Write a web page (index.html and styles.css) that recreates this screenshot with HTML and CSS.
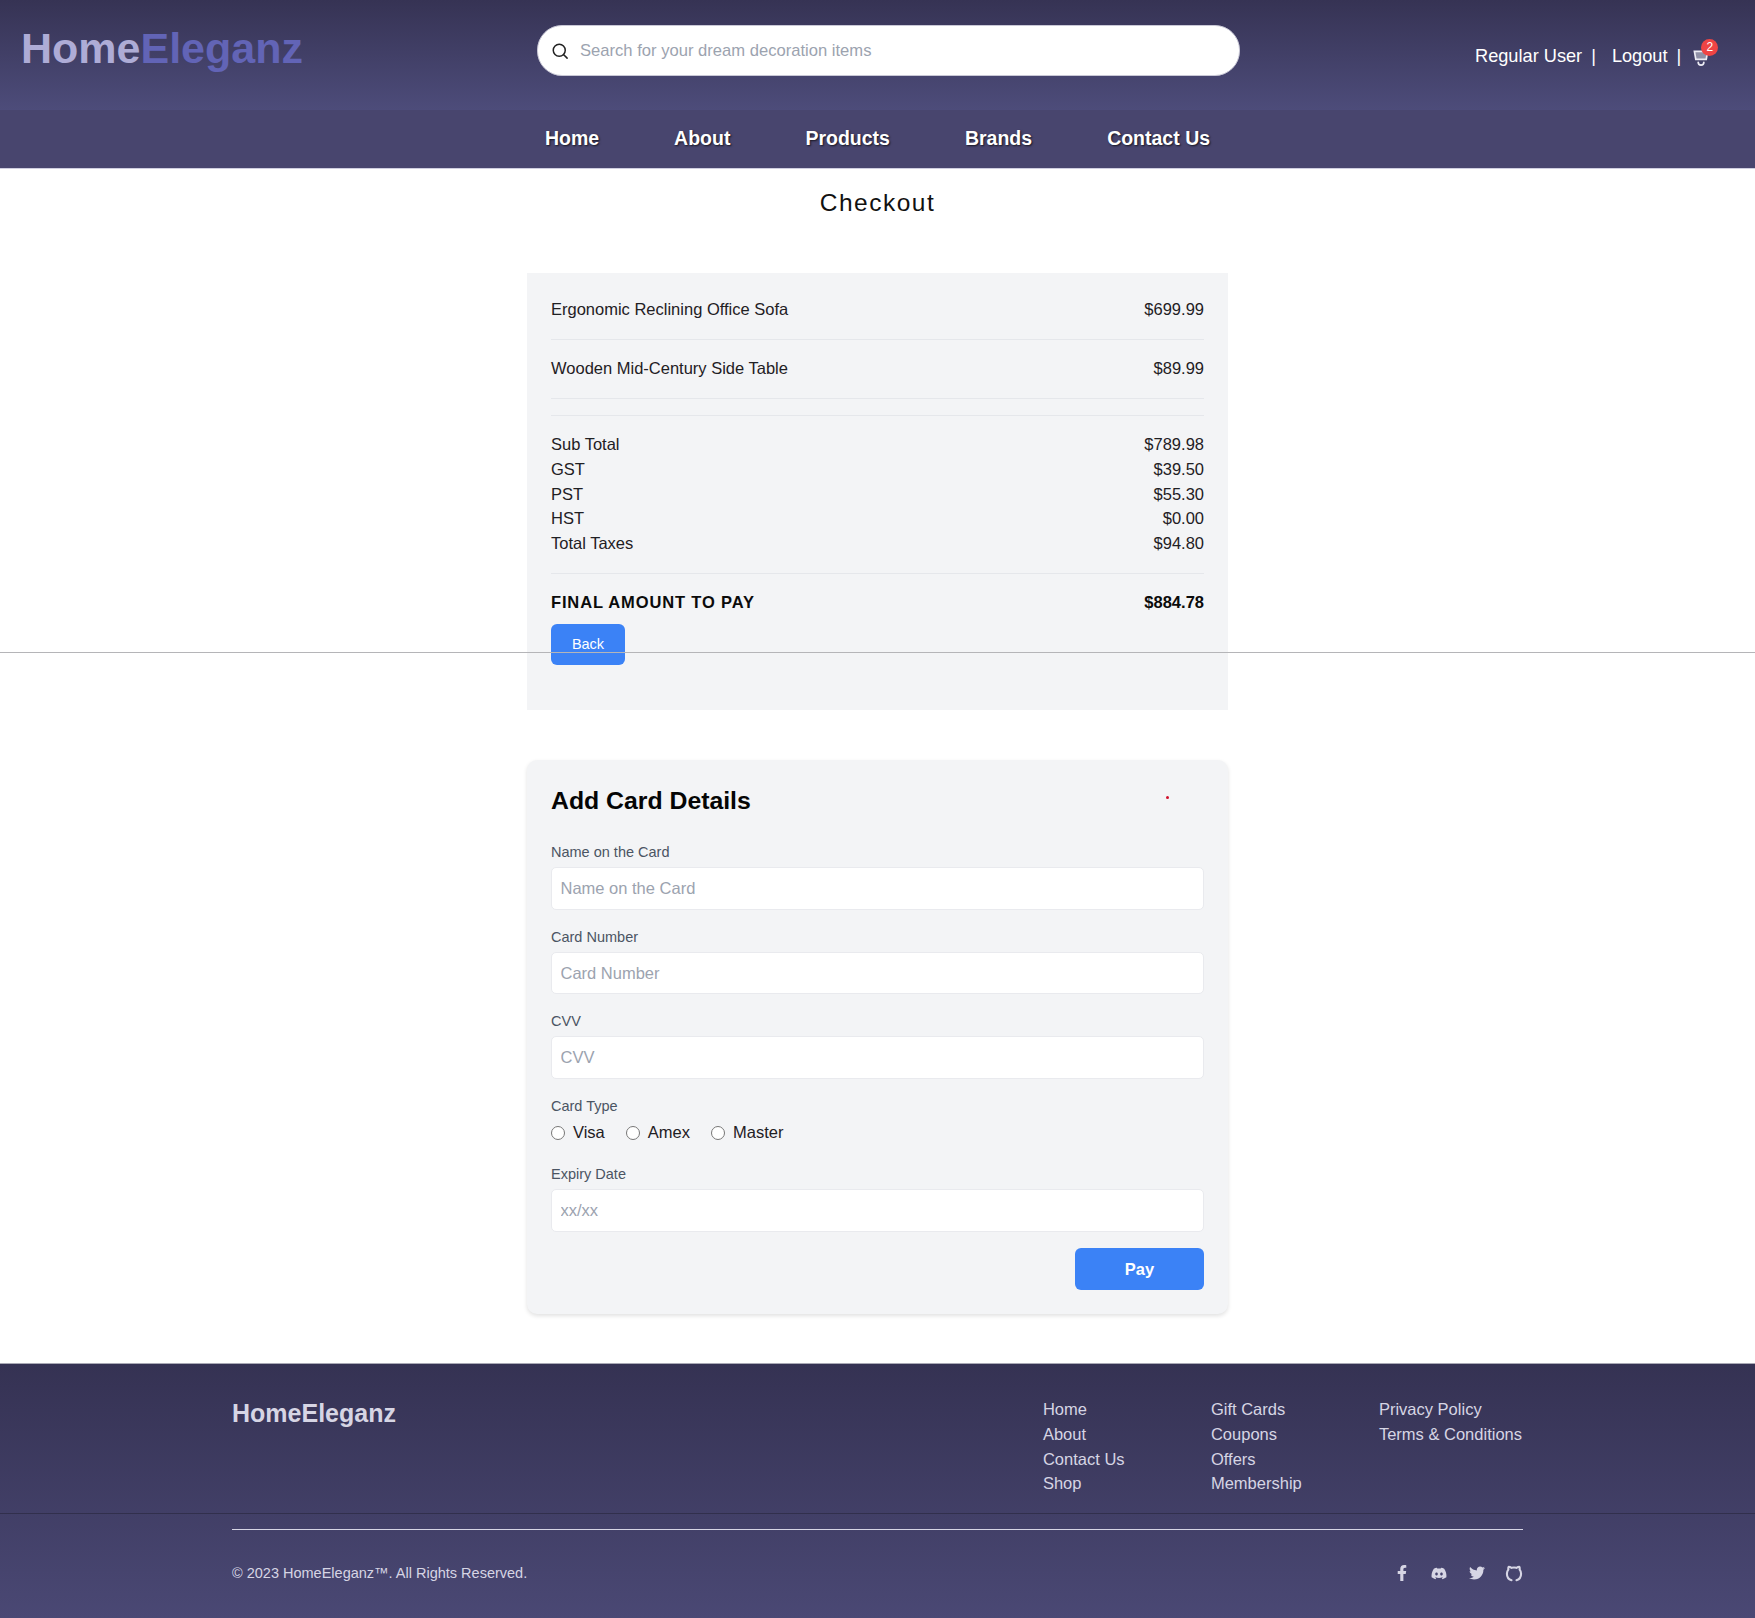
FILE: index.html
```html
<!DOCTYPE html>
<html>
<head>
<title>HomeEleganz - Checkout</title>
<link rel="stylesheet" href="styles.css">
</head>
<body>

<header class="topbar">
    <a class="logo" href="#"><span class="logo-home">Home</span><span class="logo-eleganz">Eleganz</span></a>
    <div class="search">
        <svg class="search-icon" viewBox="0 0 24 24" fill="none" stroke="#222" stroke-width="2" stroke-linecap="round"><circle cx="11" cy="11" r="8"/><line x1="17" y1="17" x2="21.5" y2="21.5"/></svg>
        <input class="search-input" type="text" placeholder="Search for your dream decoration items">
    </div>
    <div class="user-links">
        <a href="#">Regular User</a><span class="sep first-sep">|</span>
        <a href="#">Logout</a><span class="sep">|</span>
        <a class="cart" href="#">
            <svg class="cart-icon" viewBox="0 0 18 18" fill="none" stroke="#ecebf3" stroke-width="1.8" stroke-linecap="round"><path d="M1.5 1.5h14l-1.5 8.5H3z" fill="#8f90a6"/><path d="M5.5 13c0 4 6 4 6 0"/></svg>
            <span class="cart-badge">2</span>
        </a>
    </div>
</header>

<nav class="mainnav">
    <a href="#">Home</a>
    <a href="#">About</a>
    <a href="#">Products</a>
    <a href="#">Brands</a>
    <a href="#">Contact Us</a>
</nav>

<div class="stray-line"></div>

<main class="checkout">
    <h1 class="page-title">Checkout</h1>

    <section class="panel summary">
        <div class="item-row"><span>Ergonomic Reclining Office Sofa</span><span>$699.99</span></div>
        <div class="item-row"><span>Wooden Mid-Century Side Table</span><span>$89.99</span></div>

        <div class="totals">
            <div class="total-row"><span>Sub Total</span><span>$789.98</span></div>
            <div class="total-row"><span>GST</span><span>$39.50</span></div>
            <div class="total-row"><span>PST</span><span>$55.30</span></div>
            <div class="total-row"><span>HST</span><span>$0.00</span></div>
            <div class="total-row"><span>Total Taxes</span><span>$94.80</span></div>
        </div>

        <div class="final-row"><span class="final-label">FINAL AMOUNT TO PAY</span><span>$884.78</span></div>
        <button class="btn btn-back">Back</button>
    </section>

    <section class="panel card-form">
        <div class="form-head">
            <h2>Add Card Details</h2>
            <span class="red-dot"></span>
        </div>

        <div class="field">
            <label>Name on the Card</label>
            <input type="text" placeholder="Name on the Card">
        </div>
        <div class="field">
            <label>Card Number</label>
            <input type="text" placeholder="Card Number">
        </div>
        <div class="field">
            <label>CVV</label>
            <input type="text" placeholder="CVV">
        </div>
        <div class="field">
            <label>Card Type</label>
            <div class="radios">
                <span class="radio-item"><input type="radio" name="cardType"> Visa</span>
                <span class="radio-item"><input type="radio" name="cardType"> Amex</span>
                <span class="radio-item"><input type="radio" name="cardType"> Master</span>
            </div>
        </div>
        <div class="field last-field">
            <label>Expiry Date</label>
            <input type="text" placeholder="xx/xx">
        </div>
        <div class="form-actions">
            <button class="btn btn-pay">Pay</button>
        </div>
    </section>
</main>

<footer class="footer">
    <div class="footer-top">
        <div class="footer-inner footer-columns">
            <div class="footer-brand">HomeEleganz</div>
            <ul class="footer-col col-one">
                <li>Home</li>
                <li>About</li>
                <li>Contact Us</li>
                <li>Shop</li>
            </ul>
            <ul class="footer-col col-two">
                <li>Gift Cards</li>
                <li>Coupons</li>
                <li>Offers</li>
                <li>Membership</li>
            </ul>
            <ul class="footer-col">
                <li>Privacy Policy</li>
                <li>Terms &amp; Conditions</li>
            </ul>
        </div>
    </div>
    <div class="footer-inner footer-bottom">
        <span class="copyright">© 2023 HomeEleganz™. All Rights Reserved.</span>
        <div class="socials">
            <svg class="social" viewBox="0 0 320 512"><path d="M279.14 288l14.22-92.66h-88.91v-60.13c0-25.35 12.42-50.06 52.24-50.06h40.42V6.26S260.43 0 225.36 0c-73.22 0-121.08 44.38-121.08 124.72v70.62H22.89V288h81.39v224h100.17V288z"/></svg>
            <svg class="social discord" viewBox="0 0 640 512"><path d="M524.531,69.836a1.5,1.5,0,0,0-.764-.7A485.065,485.065,0,0,0,404.081,32.03a1.816,1.816,0,0,0-1.923.91,337.461,337.461,0,0,0-14.9,30.6,447.848,447.848,0,0,0-134.426,0,309.541,309.541,0,0,0-15.135-30.6,1.89,1.89,0,0,0-1.924-.91A483.689,483.689,0,0,0,116.085,69.137a1.712,1.712,0,0,0-.788.676C39.068,183.651,18.186,294.69,28.43,404.354a2.016,2.016,0,0,0,.765,1.375A487.666,487.666,0,0,0,176.02,479.918a1.9,1.9,0,0,0,2.063-.676A348.2,348.2,0,0,0,208.12,430.4a1.86,1.86,0,0,0-1.019-2.588,321.173,321.173,0,0,1-45.868-21.853,1.885,1.885,0,0,1-.185-3.126c3.082-2.309,6.166-4.711,9.109-7.137a1.819,1.819,0,0,1,1.9-.256c96.229,43.917,200.41,43.917,295.5,0a1.812,1.812,0,0,1,1.924.233c2.944,2.426,6.027,4.851,9.132,7.16a1.884,1.884,0,0,1-.162,3.126,301.407,301.407,0,0,1-45.89,21.83,1.875,1.875,0,0,0-1,2.611,391.055,391.055,0,0,0,30.014,48.815,1.864,1.864,0,0,0,2.063.7A486.048,486.048,0,0,0,610.7,405.729a1.882,1.882,0,0,0,.765-1.352C623.729,277.594,590.933,167.465,524.531,69.836ZM222.491,337.58c-28.972,0-52.844-26.587-52.844-59.239S193.056,219.1,222.491,219.1c29.665,0,53.306,26.82,52.843,59.239C275.334,310.993,251.924,337.58,222.491,337.58Zm195.38,0c-28.971,0-52.843-26.587-52.843-59.239S388.437,219.1,417.871,219.1c29.667,0,53.307,26.82,52.844,59.239C470.715,310.993,447.538,337.58,417.871,337.58Z"/></svg>
            <svg class="social" viewBox="0 0 512 512"><path d="M459.37 151.716c.325 4.548.325 9.097.325 13.645 0 138.72-105.583 298.558-298.558 298.558-59.452 0-114.68-17.219-161.137-47.106 8.447.974 16.568 1.299 25.34 1.299 49.055 0 94.213-16.568 130.274-44.832-46.132-.975-84.792-31.188-98.112-72.772 6.498.974 12.995 1.624 19.818 1.624 9.421 0 18.843-1.3 27.614-3.573-48.081-9.747-84.143-51.98-84.143-102.985v-1.299c13.969 7.797 30.214 12.67 47.431 13.319-28.264-18.843-46.781-51.005-46.781-87.391 0-19.492 5.197-37.36 14.294-52.954 51.655 63.675 129.3 105.258 216.365 109.807-1.624-7.797-2.599-15.918-2.599-24.04 0-57.828 46.782-104.934 104.934-104.934 30.213 0 57.502 12.67 76.67 33.137 23.715-4.548 46.456-13.32 66.599-25.34-7.798 24.366-24.366 44.833-46.132 57.827 21.117-2.273 41.584-8.122 60.426-16.243-14.292 20.791-32.161 39.308-52.628 54.253z"/></svg>
            <svg class="social github" viewBox="0 0 24 24" fill="none" stroke-width="3" stroke-linecap="round" stroke-linejoin="round"><path d="M8.5 21.5C4.5 20.2 2 16.5 2 12.3 2 10 2.8 8 4 6.5 3.8 5 3.9 3.5 4.5 2.5 6 2.5 7.3 3.2 8.5 4c2-.6 5-.6 7 0 1.2-.8 2.5-1.5 4-1.5.6 1 .7 2.5.5 4 1.2 1.5 2 3.5 2 5.8 0 4.2-2.5 7.9-6.5 9.2"/></svg>
        </div>
    </div>
</footer>

</body>
</html>
```
FILE: styles.css
```css
* {
    box-sizing: border-box;
}
html, body {
    margin: 0;
    padding: 0;
}
body {
    position: relative;
    font-family: "Liberation Sans", Arial, sans-serif;
    font-size: 16.5px;
    color: #1f2024;
    background: #ffffff;
}
a {
    color: inherit;
    text-decoration: none;
}

/* Top bar */
.topbar {
    display: grid;
    grid-template-columns: 537px 703px 1fr;
    height: 110px;
    background: linear-gradient(to bottom, #363354, #4d4c7a);
}
.logo {
    padding: 21px 0 0 21px;
    font-size: 43px;
    line-height: 54px;
    font-weight: bold;
}
.logo-home {
    color: #aeacd6;
}
.logo-eleganz {
    color: #6264b6;
}
.search {
    display: flex;
    align-items: center;
    height: 51px;
    margin-top: 25px;
    padding: 0 13px;
    background: #ffffff;
    border: 1px solid #c9c8d6;
    border-radius: 25px;
}
.search-icon {
    width: 18px;
    height: 18px;
    margin-right: 9px;
    flex: none;
}
.search-input {
    flex: 1;
    border: none;
    outline: none;
    background: transparent;
    font: 16.6px "Liberation Sans", Arial, sans-serif;
}
.search-input::placeholder {
    color: #9ca3af;
}
.user-links {
    display: flex;
    align-items: flex-start;
    padding: 45px 0 0 235px;
    color: #ffffff;
    font-size: 18.2px;
    line-height: 22px;
    white-space: nowrap;
}
.sep {
    margin: 0 12px 0 9px;
}
.first-sep {
    margin-right: 16px;
}
.cart {
    position: relative;
    display: block;
    width: 18px;
    height: 18px;
    margin-top: 5px;
}
.cart-icon {
    display: block;
    width: 17px;
    height: 17px;
}
.cart-badge {
    position: absolute;
    left: 8px;
    top: -11px;
    width: 17px;
    height: 17px;
    border-radius: 50%;
    background: #ef4444;
    color: #ffffff;
    font-size: 12px;
    line-height: 17px;
    text-align: center;
}

/* Nav */
.mainnav {
    display: flex;
    justify-content: center;
    gap: 75px;
    height: 59px;
    padding-top: 15px;
    background: #48456e;
    border-bottom: 1px solid #cfcee0;
    color: #ffffff;
    font-size: 19.5px;
    font-weight: bold;
    line-height: 26px;
    text-shadow: 1px 1px 2px rgba(0, 0, 0, 0.7);
}

/* Gray line running across the page */
.stray-line {
    position: absolute;
    left: 0;
    right: 0;
    top: 652px;
    height: 1px;
    background: #b5b5b8;
}

/* Checkout */
.checkout {
    width: 701px;
    margin: 0 auto;
    padding-bottom: 49px;
}
.page-title {
    margin: 0;
    height: 104px;
    padding-top: 17px;
    font-size: 24.5px;
    font-weight: normal;
    line-height: 34px;
    letter-spacing: 1.5px;
    text-align: center;
    color: #111111;
}
.panel {
    background: #f3f4f6;
    padding-left: 24px;
    padding-right: 24px;
}
.summary {
    padding-top: 8px;
    padding-bottom: 45px;
}
.item-row, .total-row, .final-row {
    display: flex;
    justify-content: space-between;
}
.item-row {
    height: 59px;
    padding-bottom: 2px;
    align-items: center;
    border-bottom: 1px solid #e5e7eb;
}
.totals {
    margin-top: 16px;
    padding: 16px 0 17px;
    border-top: 1px solid #e5e7eb;
    border-bottom: 1px solid #e5e7eb;
}
.total-row {
    line-height: 24.8px;
}
.final-row {
    padding-top: 16px;
    font-weight: bold;
    line-height: 25px;
    color: #0b0b0b;
}
.final-label {
    letter-spacing: 0.85px;
}
.btn {
    display: block;
    border: none;
    border-radius: 6px;
    background: #3b82f6;
    color: #ffffff;
    font-family: "Liberation Sans", Arial, sans-serif;
    font-size: 16.5px;
}
.btn-back {
    width: 74px;
    height: 41px;
    margin-top: 9px;
    font-size: 14.5px;
}
.card-form {
    margin-top: 50px;
    padding-top: 25px;
    padding-bottom: 24px;
    border-radius: 10px;
    box-shadow: 0 2px 4px rgba(0, 0, 0, 0.12);
}
.form-head {
    display: flex;
    justify-content: space-between;
    height: 32px;
    margin-bottom: 25px;
}
.form-head h2 {
    margin: 0;
    font-size: 24.8px;
    line-height: 32px;
    color: #050505;
}
.red-dot {
    width: 3px;
    height: 3px;
    margin: 11px 35px 0 0;
    background: #d0102c;
    border-radius: 50%;
}
.field {
    margin-bottom: 17px;
}
.last-field {
    margin-bottom: 16px;
}
.field label {
    display: block;
    margin-bottom: 5px;
    font-size: 14.5px;
    line-height: 20px;
    color: #4b5563;
}
.field input[type="text"] {
    display: block;
    width: 100%;
    height: 42.7px;
    padding: 0 8.5px;
    background: #ffffff;
    border: 1px solid #e9eaee;
    border-radius: 5px;
    outline: none;
    font: 16.5px "Liberation Sans", Arial, sans-serif;
}
.field input::placeholder {
    color: #9ca3af;
}
.radios {
    display: flex;
    gap: 21px;
    line-height: 25px;
    margin-top: -1px;
    padding-bottom: 2.3px;
}
.radio-item {
    display: flex;
    align-items: center;
    gap: 8px;
}
.radio-item input {
    width: 14px;
    height: 14px;
    margin: 0;
}
.form-actions {
    display: flex;
    justify-content: flex-end;
    height: 42px;
}
.btn-pay {
    width: 129px;
    height: 42px;
    font-weight: bold;
}

/* Footer */
.footer {
    height: 255px;
    background: linear-gradient(to bottom, #353253, #4a4874);
    border-top: 1px solid #a9a9b5;
    color: #d6d5e4;
}
.footer-inner {
    width: 1291px;
    margin: 0 auto;
}
.footer-top {
    height: 150px;
    border-bottom: 1px solid #312f4c;
}
.footer-columns {
    display: flex;
    padding-top: 33px;
    padding-right: 1px;
}
.footer-brand {
    flex: 1;
    margin-top: 1px;
    font-size: 25px;
    font-weight: bold;
    line-height: 30px;
}
.footer-col {
    margin: 0;
    padding: 0;
    list-style: none;
    line-height: 24.8px;
    white-space: nowrap;
}
.col-one, .col-two {
    width: 168px;
}
.footer-bottom {
    display: flex;
    justify-content: space-between;
    align-items: center;
    margin-top: 15px;
    padding-top: 31px;
    border-top: 1px solid #d6d5e4;
}
.copyright {
    font-size: 14.5px;
    line-height: 24px;
}
.socials {
    display: flex;
    align-items: center;
    gap: 19.5px;
}
.social {
    width: 18px;
    height: 16px;
    fill: #d6d5e4;
}
.discord {
    height: 13px;
}
.github {
    height: 17px;
    fill: none;
    stroke: #d6d5e4;
}
```
